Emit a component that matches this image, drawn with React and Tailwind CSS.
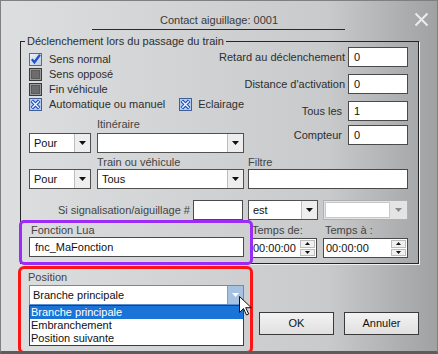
import React from "react";

const Arrow = ({ color = "#111" }) => (
  <svg width="7" height="4" viewBox="0 0 7 4">
    <path d="M0 0h7L3.5 4z" fill={color} />
  </svg>
);

const Combo = ({ value, className = "" }) => (
  <div className={`flex h-[20px] shrink-0 border border-[#505050] bg-white ${className}`}>
    <div className="flex-1 pl-[4px] leading-[18px] text-[#111]">{value}</div>
    <div className="flex w-[16px] items-center justify-center border-l border-[#bdbdbd] bg-[#eeeeee]">
      <Arrow />
    </div>
  </div>
);

const Field = ({ value = "", className = "" }) => (
  <div className={`h-[20px] shrink-0 border border-[#4a4a4a] bg-white pl-[5px] leading-[18px] text-[#111] ${className}`}>
    {value}
  </div>
);

const Spin = ({ className = "" }) => (
  <div className={`flex h-[20px] shrink-0 border border-[#4a4a4a] bg-white ${className}`}>
    <div className="flex-1 leading-[18px] text-[#111]">00:00:00</div>
    <div className="flex w-[16px] flex-col gap-px py-px pr-px">
      <div className="flex flex-1 items-center justify-center border border-[#bcbcbc] bg-[#f0f0f0]">
        <svg width="5" height="3" viewBox="0 0 5 3"><path d="M0 3h5L2.5 0z" fill="#111" /></svg>
      </div>
      <div className="flex flex-1 items-center justify-center border border-[#bcbcbc] bg-[#f0f0f0]">
        <svg width="5" height="3" viewBox="0 0 5 3"><path d="M0 0h5L2.5 3z" fill="#111" /></svg>
      </div>
    </div>
  </div>
);

const CheckBlue = () => (
  <svg width="13" height="13" viewBox="0 0 13 13" className="shrink-0">
    <defs>
      <linearGradient id="cb1" x1="0" y1="0" x2="1" y2="1">
        <stop offset="0" stopColor="#eef2f8" />
        <stop offset="1" stopColor="#bccbe2" />
      </linearGradient>
    </defs>
    <rect x="0.5" y="0.5" width="12" height="12" fill="url(#cb1)" stroke="#5d6b80" />
    <path d="M2.8 6.3l2.6 3L11 1.8" fill="none" stroke="#1f55c8" strokeWidth="2.3" />
  </svg>
);

const CheckGray = () => (
  <svg width="13" height="13" viewBox="0 0 13 13" className="shrink-0">
    <rect x="0.5" y="0.5" width="12" height="12" fill="#9a9a9a" stroke="#3a3a3a" />
    <rect x="2.5" y="2.5" width="8" height="8" fill="#6c6c6c" stroke="#5a5a5a" />
  </svg>
);

const CheckX = () => (
  <svg width="13" height="13" viewBox="0 0 13 13" className="shrink-0">
    <rect x="0.5" y="0.5" width="12" height="12" fill="#b9cdeb" stroke="#3f5f98" />
    <path d="M2.8 2.8l7.4 7.4M10.2 2.8l-7.4 7.4" stroke="#1d4fc0" strokeWidth="3.6" />
    <path d="M3.2 3.2l6.6 6.6M9.8 3.2l-6.6 6.6" stroke="#ffffff" strokeWidth="1.3" />
  </svg>
);

const CheckRow = ({ box, label }) => (
  <div className="flex h-[15px] items-center gap-[7px]">
    {box}
    <span>{label}</span>
  </div>
);

const Button = ({ children }) => (
  <div className="h-[23px] w-[75px] border border-[#3a3a3a] bg-gradient-to-b from-[#f3f3f3] to-[#e0e0e0] text-center leading-[21px] text-[#111]">
    {children}
  </div>
);

export default function App() {
  return (
    <div className="relative h-[354px] w-[438px] overflow-hidden border border-[#7e8082] border-b-[3px] border-b-[#5a5c5e] bg-gradient-to-r from-[#dcdedf] via-[#c8cacc] via-75% to-[#9fa1a3] font-['Liberation_Sans',Arial,sans-serif] text-[11px] leading-[13px] text-[#2e2e2e]">
      {/* title */}
      <div className="grid grid-cols-[1fr_auto_1fr] pt-[13px]">
        <div />
        <div className="text-[#3a3a3a]">Contact aiguillage: 0001</div>
        <div className="-mt-[2px] flex justify-end pr-[8px]">
          <svg width="15" height="15" viewBox="0 0 15 15">
            <path d="M1.5 1.5l12 12M13.5 1.5l-12 12" stroke="#ececec" strokeWidth="2" />
          </svg>
        </div>
      </div>
      <div className="ml-[91px] mt-[2px] h-px w-[253px] bg-[#2a2a2a]" />

      {/* group box */}
      <fieldset className="ml-[19px] mt-[5px] h-[229px] w-[399px] border border-[#252525] shadow-[1px_1px_0_#f2f2f2]">
        <legend className="ml-[4px] px-[2px] text-[#2e2e2e]">Déclenchement lors du passage du train</legend>
        <div className="grid grid-cols-[215px_160px] gap-x-[4px] pl-[8px]">
          {/* left column */}
          <div className="flex flex-col">
            <div className="pt-[4px]">
              <CheckRow box={<CheckBlue />} label="Sens normal" />
              <CheckRow box={<CheckGray />} label="Sens opposé" />
              <CheckRow box={<CheckGray />} label="Fin véhicule" />
              <div className="flex h-[15px] items-center">
                <div className="flex w-[156px] items-center gap-[7px]">
                  <CheckX />
                  <span>Automatique ou manuel</span>
                </div>
                <div className="flex items-center gap-[6px]">
                  <CheckX />
                  <span>Eclairage</span>
                </div>
              </div>
            </div>
            <div className="mt-[6px] pl-[68px] text-[#444]">Itinéraire</div>
            <div className="mt-[2px] flex gap-[6px]">
              <Combo value="Pour" className="w-[62px]" />
              <Combo value="" className="w-[147px]" />
            </div>
            <div className="mt-[3px] pl-[68px] text-[#444]">Train ou véhicule</div>
            <div className="flex gap-[6px]">
              <Combo value="Pour" className="w-[62px]" />
              <Combo value="Tous" className="w-[147px]" />
            </div>
            <div className="mt-[11px] flex items-center justify-end gap-[3px] pr-[1px]">
              <span className="whitespace-nowrap text-[#444]">Si signalisation/aiguillage #</span>
              <Field className="w-[50px]" />
            </div>
            <div className="mt-[4px] pl-[2px] text-[#444]">Fonction Lua</div>
            <Field value="fnc_MaFonction" className="w-[215px]" />
          </div>

          {/* right column */}
          <div className="-mt-[1px] flex flex-col">
            <div className="flex h-[20px] items-center justify-end gap-[3px]">
              <span className="whitespace-nowrap">Retard au déclenchement</span>
              <Field value="0" className="w-[60px]" />
            </div>
            <div className="mt-[7px] flex h-[20px] items-center justify-end gap-[3px]">
              <span className="whitespace-nowrap">Distance d'activation</span>
              <Field value="0" className="w-[60px]" />
            </div>
            <div className="mt-[7px] flex h-[20px] items-center justify-end gap-[6px]">
              <span className="whitespace-nowrap">Tous les</span>
              <Field value="1" className="w-[60px]" />
            </div>
            <div className="mt-[4px] flex h-[20px] items-center justify-end gap-[6px]">
              <span className="whitespace-nowrap">Compteur</span>
              <Field value="0" className="w-[60px]" />
            </div>
            <div className="mt-[11px] text-[#444]">Filtre</div>
            <Field className="w-[160px]" />
            <div className="mt-[11px] flex gap-[5px]">
              <Combo value="est" className="w-[70px]" />
              <div className="flex h-[20px] w-[85px] border border-[#b0b0b0] bg-[#e4e4e4] p-[1px]">
                <div className="flex-1 border border-[#c8c8c8] bg-white" />
                <div className="flex w-[16px] items-center justify-center">
                  <Arrow color="#8a8a8a" />
                </div>
              </div>
            </div>
            <div className="mt-[4px] flex pl-[4px] text-[#444]">
              <span className="w-[73px]">Temps de:</span>
              <span>Temps à :</span>
            </div>
            <div className="mt-[1px] flex gap-[6px] pl-[3px]">
              <Spin className="w-[66px] pl-[1px]" />
              <Spin className="w-[85px] pl-[2px]" />
            </div>
          </div>
        </div>
      </fieldset>

      {/* bottom */}
      <div className="flex pl-[28px]">
        <div className="w-[215px] pt-[7px]">
          <div className="-ml-[1px] text-[#444]">Position</div>
          <div className="relative mt-[1px] flex h-[20px] border border-[#5b8ed0] bg-white">
            <div className="flex-1 pl-[3px] leading-[18px] text-[#111]">Branche principale</div>
            <div className="flex w-[16px] items-center justify-center border-l border-[#7ba0cf] bg-[#a6c2e3]">
              <Arrow color="#ffffff" />
            </div>
            <div className="absolute -left-px top-[19px] w-[215px] border border-[#3c3c3c] bg-white text-[#111]">
              <div className="h-[13px] bg-[#1a74d8] pl-[1px] text-white">Branche principale</div>
              <div className="h-[13px] pl-[1px]">Embranchement</div>
              <div className="h-[13px] pl-[1px]">Position suivante</div>
            </div>
          </div>
        </div>
        <div className="ml-[15px] mt-[48px] flex gap-[10px]">
          <Button>OK</Button>
          <Button>Annuler</Button>
        </div>
      </div>

      {/* annotations */}
      <div className="pointer-events-none absolute left-[18px] top-[219px] h-[45px] w-[234px] rounded-[5px] border-[3px] border-[#9a2cf6]" />
      <div className="pointer-events-none absolute left-[17px] top-[265px] h-[88px] w-[235px] rounded-[6px] border-[3px] border-[#ff1414]" />

      {/* cursor */}
      <svg className="absolute left-[238px] top-[295px]" width="13" height="20" viewBox="0 0 13 20">
        <path d="M0.5 0.5v16l4-4 3 6.5 2.2-1-3-6.3h5.6z" fill="#ffffff" stroke="#111" strokeWidth="1" />
      </svg>
    </div>
  );
}
